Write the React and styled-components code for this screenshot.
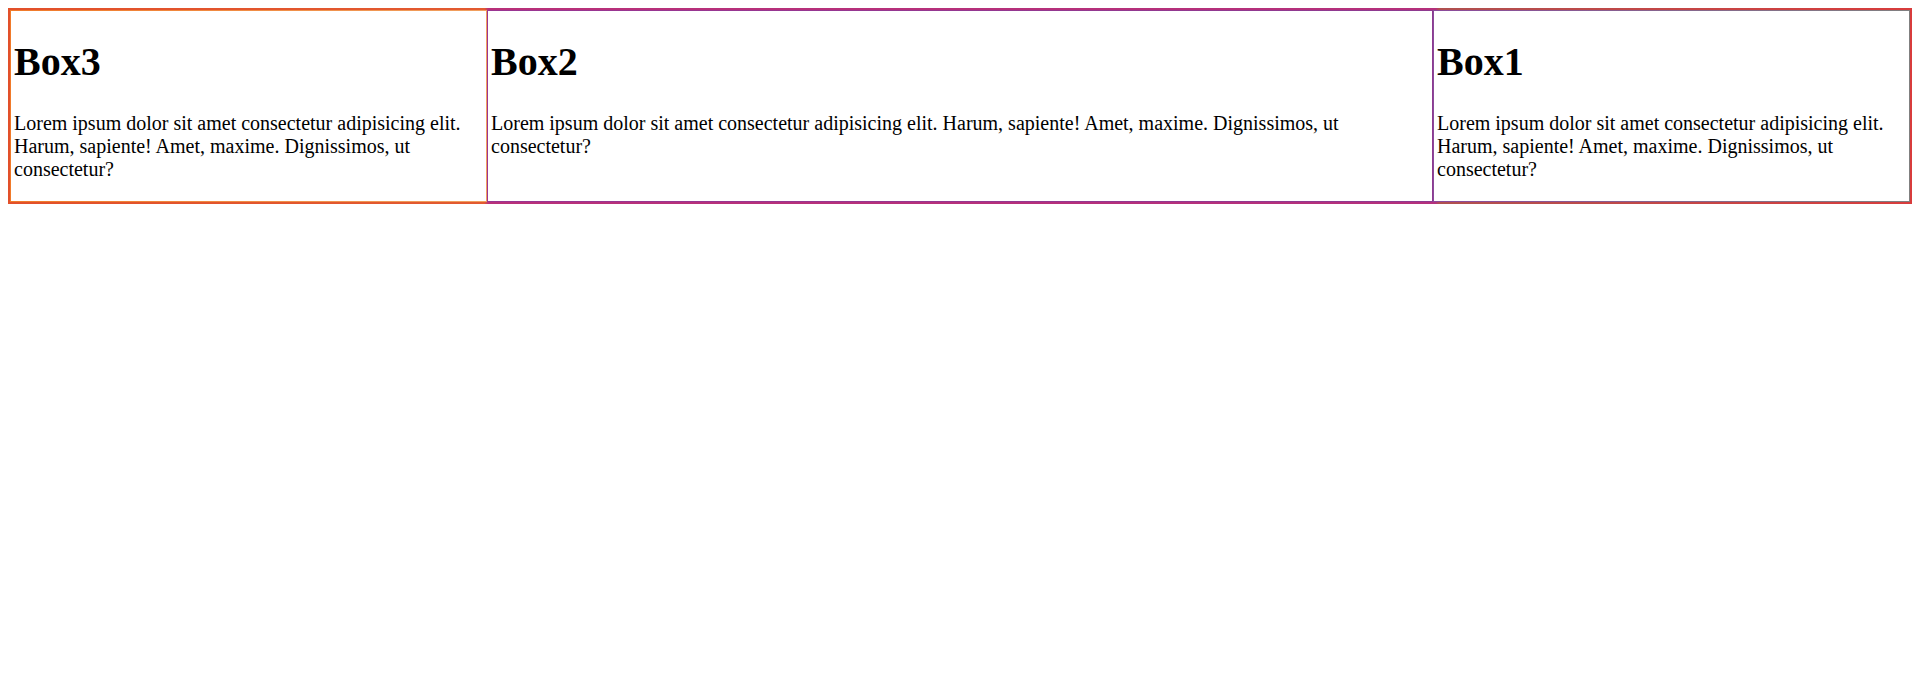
import React from 'react';
import styled, { createGlobalStyle } from 'styled-components';

const Global = createGlobalStyle`
  body { margin: 8px; font-family: "Liberation Serif", "Times New Roman", serif; font-size: 20px; color: #000; background: #fff; }
`;

const Wrap = styled.div`
  display: flex;
  flex-direction: row-reverse;
  border: 2px solid;
  border-image: linear-gradient(to right, #e2502a 0%, #e25a30 25%, #b8307a 25.2%, #b4307c 75%, #b05050 75.2%, #d83c3c 100%) 1;
`;

const Box = styled.div`
  flex: ${(p) => p.$grow};
  padding: 0 3px;
  border: 1px solid;
  border-image: ${(p) => p.$edge} 1;
  min-width: 0;
`;

const Title = styled.h1`
  font-size: 2em;
  margin: 0.67em 0;
  font-weight: bold;
`;

const Text = styled.p`
  margin: 1em 0;
`;

const boxes = [
  { name: 'Box1', grow: 1, edge: 'linear-gradient(to right, #8b4a9b, #808080)' },
  { name: 'Box2', grow: 2, edge: 'linear-gradient(to right, #9a3592, #8e3a90)' },
  { name: 'Box3', grow: 1, edge: 'linear-gradient(to right, #f07a2a, #f0a060)' },
];

const lorem = 'Lorem ipsum dolor sit amet consectetur adipisicing elit. Harum, sapiente! Amet, maxime. Dignissimos, ut consectetur?';

const App = () => (
  <>
    <Global />
    <Wrap>
      {boxes.map((b) => (
        <Box key={b.name} $grow={b.grow} $edge={b.edge}>
          <Title>{b.name}</Title>
          <Text>{lorem}</Text>
        </Box>
      ))}
    </Wrap>
  </>
);

export default App;
